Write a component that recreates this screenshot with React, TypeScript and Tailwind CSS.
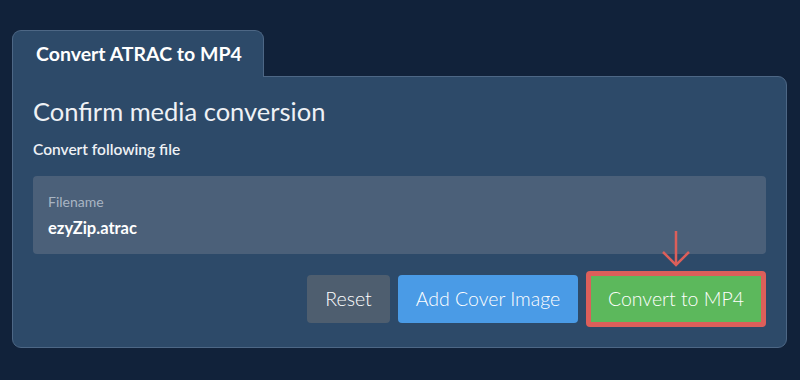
export default function App() {
  return (
    <div
      className="h-[380px] w-[800px] bg-[#11223a] pl-[12px] pr-[13px] pt-[30px]"
      style={{ fontFamily: 'Lato, "Open Sans", sans-serif' }}
    >
      {/* Tab */}
      <div className="relative z-10 -mb-px flex h-[47px] w-[252px] items-center rounded-t-[9px] border border-b-0 border-[#4d6785] bg-[#2d4a69] pl-[23px]">
        <span className="text-[19.5px] font-bold text-white">Convert ATRAC to MP4</span>
      </div>

      {/* Panel */}
      <div className="rounded-[9px] rounded-tl-none border border-[#4d6785] bg-[#2d4a69] px-[20px] pb-[20px] pt-[18px]">
        <h1 className="text-[25.5px] leading-[32px] text-[#eef1f5]">Confirm media conversion</h1>
        <p className="mt-[12px] text-[15.5px] font-semibold leading-[20px] text-[#eef1f5]">
          Convert following file
        </p>

        <div className="mt-[17px] flex h-[78px] flex-col justify-center rounded-[4px] bg-[#4b6079] pl-[15px]">
          <span className="text-[14px] leading-[18px] text-[#a9b5c3]">Filename</span>
          <span className="mt-[7px] text-[16.5px] font-bold leading-[20px] text-white">ezyZip.atrac</span>
        </div>

        {/* Actions */}
        <div className="mt-[17px] flex items-center justify-end gap-[8px]">
          <button className="h-[48px] w-[83px] rounded-[4px] bg-[#4e5e6f] text-[19.5px] font-light text-white">
            Reset
          </button>
          <button className="h-[48px] w-[180px] rounded-[4px] bg-[#4a9be6] text-[19.5px] font-light text-white">
            Add Cover Image
          </button>
          <div className="relative">
            <svg
              className="absolute left-1/2 top-[-40px] -translate-x-1/2"
              width="30"
              height="36"
              viewBox="0 0 30 36"
              fill="none"
              stroke="#dc5f5a"
              strokeWidth="2.5"
            >
              <path d="M15 0v34" />
              <path d="M2 21l13 13 13-13" />
            </svg>
            <button className="h-[56px] w-[180px] rounded-[4px] border-[5px] border-[#dc5f5a] bg-[#5cb85c] text-[19.5px] font-light text-white">
              Convert to MP4
            </button>
          </div>
        </div>
      </div>
    </div>
  );
}
